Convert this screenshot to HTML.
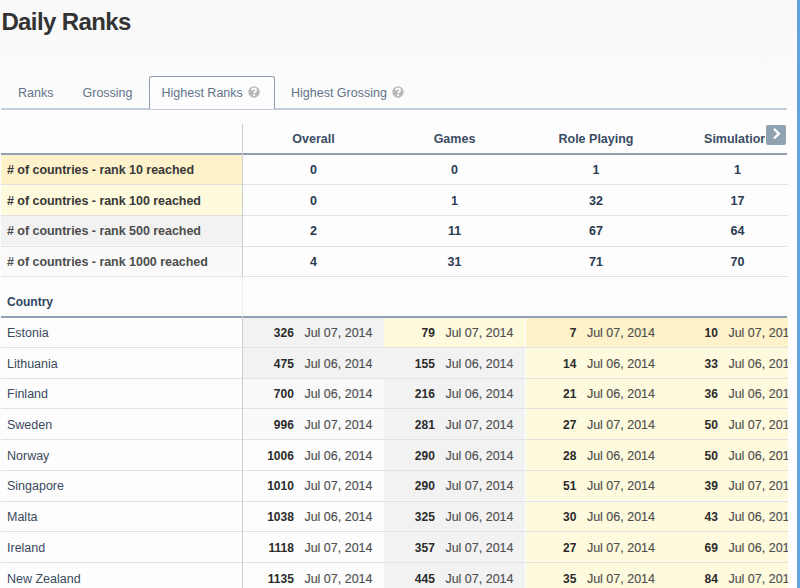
<!DOCTYPE html><html><head><meta charset="utf-8"><style>
*{margin:0;padding:0;box-sizing:border-box}
html,body{width:800px;height:588px;overflow:hidden}
body{font-family:"Liberation Sans",sans-serif;background:#fdfdfd;position:relative;color:#333}
.bg{position:absolute;left:0;top:0;width:800px;height:109px;background:linear-gradient(#f8f8f8,#fcfcfc)}
.title{position:absolute;left:1.4px;top:8.4px;font-size:24px;font-weight:bold;letter-spacing:-0.62px;color:#333;line-height:28px}
.tabline{position:absolute;left:1px;top:108.3px;width:786px;height:1.4px;background:#c0cede}
.tab{position:absolute;top:86px;font-size:12.5px;line-height:14px;color:#60738a;white-space:nowrap}
.atab{position:absolute;left:149px;top:76px;width:126px;height:33px;border:1px solid #8e9db0;border-bottom:none;border-radius:3px 3px 0 0;background:#fdfdfd}
.q{display:inline-block;width:12px;height:12px;vertical-align:-1px;margin-left:5px}
.tbl{position:absolute;left:0;top:0;width:788px;height:588px;overflow:hidden}
.vdiv{position:absolute;left:242px;width:1px;background:#cdcdcd}
.hb{position:absolute;left:1px;height:2px;background:#90a0b2}
.rl{position:absolute;left:1px;height:1px;background:#e2e2e2}
.cell{position:absolute;}
.hd{position:absolute;top:132px;font-size:12.5px;font-weight:bold;color:#3a4c63;text-align:center;width:141px;line-height:14px}
.lab{position:absolute;left:0;width:242px;font-size:12.5px;font-weight:bold;color:#3d3d3d;padding-left:7px;white-space:nowrap;letter-spacing:-0.04px}
.num{position:absolute;font-size:12.5px;font-weight:bold;color:#2a3b52;text-align:center;width:141px}
.cname{position:absolute;left:7px;font-size:12.5px;color:#3a4a5c;white-space:nowrap}
.dc{position:absolute;width:141px;text-align:right;padding-right:11.5px;white-space:nowrap;font-size:12.5px}
.dc b{font-size:12px;color:#2b2b2b;margin-right:10.5px}
.dc span{color:#4f4f4f;-webkit-text-stroke:0.15px #4f4f4f}
.arrow{position:absolute;left:765px;top:121px;width:23px;height:28px;background:#fdfdfd}
.arrow i{position:absolute;left:1px;top:4.3px;width:19.7px;height:19.6px;background:#8fa2b2;border-radius:2px}
.blue{position:absolute;left:797px;top:0;width:3px;height:588px;background:#63a3dc}
</style></head><body>
<div class="bg"></div>
<div class="title">Daily Ranks</div>
<div class="tabline"></div>
<div class="atab"></div>
<div class="tab" style="left:18px">Ranks</div>
<div class="tab" style="left:82.5px">Grossing</div>
<div class="tab" style="left:161.5px">Highest Ranks<svg class="q" width="12" height="12" viewBox="0 0 12 12"><circle cx="6" cy="6" r="5.7" fill="#b7b7b7"/><path d="M3.9 4.5C3.9 3.1 4.9 2.5 6 2.5C7.3 2.5 8.1 3.3 8.1 4.3C8.1 5.6 6.3 5.8 6.1 7.1" stroke="#fff" stroke-width="1.8" fill="none"/><rect x="5.1" y="8.2" width="2" height="1.8" fill="#fff"/></svg></div>
<div class="tab" style="left:291px">Highest Grossing<svg class="q" width="12" height="12" viewBox="0 0 12 12"><circle cx="6" cy="6" r="5.7" fill="#b7b7b7"/><path d="M3.9 4.5C3.9 3.1 4.9 2.5 6 2.5C7.3 2.5 8.1 3.3 8.1 4.3C8.1 5.6 6.3 5.8 6.1 7.1" stroke="#fff" stroke-width="1.8" fill="none"/><rect x="5.1" y="8.2" width="2" height="1.8" fill="#fff"/></svg></div>
<div class="tbl">
<div class="cell" style="left:1px;top:155px;width:241px;height:28.900000000000006px;background:#fdf2c9"></div>
<div class="lab" style="top:163.2px;line-height:14px;color:#383838"># of countries - rank 10 reached</div>
<div class="num" style="left:243px;top:163.2px;line-height:14px">0</div>
<div class="num" style="left:384px;top:163.2px;line-height:14px">0</div>
<div class="num" style="left:525.5px;top:163.2px;line-height:14px">1</div>
<div class="num" style="left:667px;top:163.2px;line-height:14px">1</div>
<div class="cell" style="left:1px;top:184.9px;width:241px;height:29.799999999999983px;background:#fefadd"></div>
<div class="lab" style="top:193.6px;line-height:14px;color:#383838"># of countries - rank 100 reached</div>
<div class="num" style="left:243px;top:193.6px;line-height:14px">0</div>
<div class="num" style="left:384px;top:193.6px;line-height:14px">1</div>
<div class="num" style="left:525.5px;top:193.6px;line-height:14px">32</div>
<div class="num" style="left:667px;top:193.6px;line-height:14px">17</div>
<div class="cell" style="left:1px;top:215.7px;width:241px;height:29.80000000000001px;background:#f2f2f2"></div>
<div class="lab" style="top:224.4px;line-height:14px;color:#4d4d4d"># of countries - rank 500 reached</div>
<div class="num" style="left:243px;top:224.4px;line-height:14px">2</div>
<div class="num" style="left:384px;top:224.4px;line-height:14px">11</div>
<div class="num" style="left:525.5px;top:224.4px;line-height:14px">67</div>
<div class="num" style="left:667px;top:224.4px;line-height:14px">64</div>
<div class="cell" style="left:1px;top:246.5px;width:241px;height:29.600000000000023px;background:#fafafa"></div>
<div class="lab" style="top:255.1px;line-height:14px;color:#4d4d4d"># of countries - rank 1000 reached</div>
<div class="num" style="left:243px;top:255.1px;line-height:14px">4</div>
<div class="num" style="left:384px;top:255.1px;line-height:14px">31</div>
<div class="num" style="left:525.5px;top:255.1px;line-height:14px">71</div>
<div class="num" style="left:667px;top:255.1px;line-height:14px">70</div>
<div class="cell" style="left:243px;top:318.00px;width:141px;height:28.80px;background:#f2f2f2"></div>
<div class="dc" style="left:243px;top:326.2px;line-height:14px"><b>326</b><span>Jul 07, 2014</span></div>
<div class="cell" style="left:384px;top:318.00px;width:141px;height:28.80px;background:#fefadd"></div>
<div class="dc" style="left:384px;top:326.2px;line-height:14px"><b>79</b><span>Jul 07, 2014</span></div>
<div class="cell" style="left:525.5px;top:318.00px;width:141px;height:28.80px;background:#fdf2c9"></div>
<div class="dc" style="left:525.5px;top:326.2px;line-height:14px"><b>7</b><span>Jul 07, 2014</span></div>
<div class="cell" style="left:667px;top:318.00px;width:141px;height:28.80px;background:#fdf2c9"></div>
<div class="dc" style="left:667px;top:326.2px;line-height:14px"><b>10</b><span>Jul 07, 2014</span></div>
<div class="cname" style="top:326.2px;line-height:14px">Estonia</div>
<div class="rl" style="top:346.80px;width:787px"></div>
<div class="cell" style="left:243px;top:347.80px;width:141px;height:29.74px;background:#f2f2f2"></div>
<div class="dc" style="left:243px;top:356.5px;line-height:14px"><b>475</b><span>Jul 06, 2014</span></div>
<div class="cell" style="left:384px;top:347.80px;width:141px;height:29.74px;background:#f2f2f2"></div>
<div class="dc" style="left:384px;top:356.5px;line-height:14px"><b>155</b><span>Jul 06, 2014</span></div>
<div class="cell" style="left:525.5px;top:347.80px;width:141px;height:29.74px;background:#fefadd"></div>
<div class="dc" style="left:525.5px;top:356.5px;line-height:14px"><b>14</b><span>Jul 06, 2014</span></div>
<div class="cell" style="left:667px;top:347.80px;width:141px;height:29.74px;background:#fefadd"></div>
<div class="dc" style="left:667px;top:356.5px;line-height:14px"><b>33</b><span>Jul 06, 2014</span></div>
<div class="cname" style="top:356.5px;line-height:14px">Lithuania</div>
<div class="rl" style="top:377.54px;width:787px"></div>
<div class="cell" style="left:243px;top:378.54px;width:141px;height:29.74px;background:#f9f9f9"></div>
<div class="dc" style="left:243px;top:387.2px;line-height:14px"><b>700</b><span>Jul 06, 2014</span></div>
<div class="cell" style="left:384px;top:378.54px;width:141px;height:29.74px;background:#f2f2f2"></div>
<div class="dc" style="left:384px;top:387.2px;line-height:14px"><b>216</b><span>Jul 06, 2014</span></div>
<div class="cell" style="left:525.5px;top:378.54px;width:141px;height:29.74px;background:#fefadd"></div>
<div class="dc" style="left:525.5px;top:387.2px;line-height:14px"><b>21</b><span>Jul 06, 2014</span></div>
<div class="cell" style="left:667px;top:378.54px;width:141px;height:29.74px;background:#fefadd"></div>
<div class="dc" style="left:667px;top:387.2px;line-height:14px"><b>36</b><span>Jul 06, 2014</span></div>
<div class="cname" style="top:387.2px;line-height:14px">Finland</div>
<div class="rl" style="top:408.28px;width:787px"></div>
<div class="cell" style="left:243px;top:409.28px;width:141px;height:29.74px;background:#f9f9f9"></div>
<div class="dc" style="left:243px;top:417.9px;line-height:14px"><b>996</b><span>Jul 07, 2014</span></div>
<div class="cell" style="left:384px;top:409.28px;width:141px;height:29.74px;background:#f2f2f2"></div>
<div class="dc" style="left:384px;top:417.9px;line-height:14px"><b>281</b><span>Jul 07, 2014</span></div>
<div class="cell" style="left:525.5px;top:409.28px;width:141px;height:29.74px;background:#fefadd"></div>
<div class="dc" style="left:525.5px;top:417.9px;line-height:14px"><b>27</b><span>Jul 07, 2014</span></div>
<div class="cell" style="left:667px;top:409.28px;width:141px;height:29.74px;background:#fefadd"></div>
<div class="dc" style="left:667px;top:417.9px;line-height:14px"><b>50</b><span>Jul 07, 2014</span></div>
<div class="cname" style="top:417.9px;line-height:14px">Sweden</div>
<div class="rl" style="top:439.02px;width:787px"></div>
<div class="cell" style="left:243px;top:440.02px;width:141px;height:29.74px;background:transparent"></div>
<div class="dc" style="left:243px;top:448.7px;line-height:14px"><b>1006</b><span>Jul 06, 2014</span></div>
<div class="cell" style="left:384px;top:440.02px;width:141px;height:29.74px;background:#f2f2f2"></div>
<div class="dc" style="left:384px;top:448.7px;line-height:14px"><b>290</b><span>Jul 06, 2014</span></div>
<div class="cell" style="left:525.5px;top:440.02px;width:141px;height:29.74px;background:#fefadd"></div>
<div class="dc" style="left:525.5px;top:448.7px;line-height:14px"><b>28</b><span>Jul 06, 2014</span></div>
<div class="cell" style="left:667px;top:440.02px;width:141px;height:29.74px;background:#fefadd"></div>
<div class="dc" style="left:667px;top:448.7px;line-height:14px"><b>50</b><span>Jul 06, 2014</span></div>
<div class="cname" style="top:448.7px;line-height:14px">Norway</div>
<div class="rl" style="top:469.76px;width:787px"></div>
<div class="cell" style="left:243px;top:470.76px;width:141px;height:29.74px;background:transparent"></div>
<div class="dc" style="left:243px;top:479.4px;line-height:14px"><b>1010</b><span>Jul 07, 2014</span></div>
<div class="cell" style="left:384px;top:470.76px;width:141px;height:29.74px;background:#f2f2f2"></div>
<div class="dc" style="left:384px;top:479.4px;line-height:14px"><b>290</b><span>Jul 07, 2014</span></div>
<div class="cell" style="left:525.5px;top:470.76px;width:141px;height:29.74px;background:#fefadd"></div>
<div class="dc" style="left:525.5px;top:479.4px;line-height:14px"><b>51</b><span>Jul 07, 2014</span></div>
<div class="cell" style="left:667px;top:470.76px;width:141px;height:29.74px;background:#fefadd"></div>
<div class="dc" style="left:667px;top:479.4px;line-height:14px"><b>39</b><span>Jul 07, 2014</span></div>
<div class="cname" style="top:479.4px;line-height:14px">Singapore</div>
<div class="rl" style="top:500.50px;width:787px"></div>
<div class="cell" style="left:243px;top:501.50px;width:141px;height:29.74px;background:transparent"></div>
<div class="dc" style="left:243px;top:510.2px;line-height:14px"><b>1038</b><span>Jul 06, 2014</span></div>
<div class="cell" style="left:384px;top:501.50px;width:141px;height:29.74px;background:#f2f2f2"></div>
<div class="dc" style="left:384px;top:510.2px;line-height:14px"><b>325</b><span>Jul 06, 2014</span></div>
<div class="cell" style="left:525.5px;top:501.50px;width:141px;height:29.74px;background:#fefadd"></div>
<div class="dc" style="left:525.5px;top:510.2px;line-height:14px"><b>30</b><span>Jul 06, 2014</span></div>
<div class="cell" style="left:667px;top:501.50px;width:141px;height:29.74px;background:#fefadd"></div>
<div class="dc" style="left:667px;top:510.2px;line-height:14px"><b>43</b><span>Jul 06, 2014</span></div>
<div class="cname" style="top:510.2px;line-height:14px">Malta</div>
<div class="rl" style="top:531.24px;width:787px"></div>
<div class="cell" style="left:243px;top:532.24px;width:141px;height:29.74px;background:transparent"></div>
<div class="dc" style="left:243px;top:540.9px;line-height:14px"><b>1118</b><span>Jul 07, 2014</span></div>
<div class="cell" style="left:384px;top:532.24px;width:141px;height:29.74px;background:#f2f2f2"></div>
<div class="dc" style="left:384px;top:540.9px;line-height:14px"><b>357</b><span>Jul 07, 2014</span></div>
<div class="cell" style="left:525.5px;top:532.24px;width:141px;height:29.74px;background:#fefadd"></div>
<div class="dc" style="left:525.5px;top:540.9px;line-height:14px"><b>27</b><span>Jul 07, 2014</span></div>
<div class="cell" style="left:667px;top:532.24px;width:141px;height:29.74px;background:#fefadd"></div>
<div class="dc" style="left:667px;top:540.9px;line-height:14px"><b>69</b><span>Jul 06, 2014</span></div>
<div class="cname" style="top:540.9px;line-height:14px">Ireland</div>
<div class="rl" style="top:561.98px;width:787px"></div>
<div class="cell" style="left:243px;top:562.98px;width:141px;height:29.74px;background:transparent"></div>
<div class="dc" style="left:243px;top:571.6px;line-height:14px"><b>1135</b><span>Jul 07, 2014</span></div>
<div class="cell" style="left:384px;top:562.98px;width:141px;height:29.74px;background:#f2f2f2"></div>
<div class="dc" style="left:384px;top:571.6px;line-height:14px"><b>445</b><span>Jul 07, 2014</span></div>
<div class="cell" style="left:525.5px;top:562.98px;width:141px;height:29.74px;background:#fefadd"></div>
<div class="dc" style="left:525.5px;top:571.6px;line-height:14px"><b>35</b><span>Jul 07, 2014</span></div>
<div class="cell" style="left:667px;top:562.98px;width:141px;height:29.74px;background:#fefadd"></div>
<div class="dc" style="left:667px;top:571.6px;line-height:14px"><b>84</b><span>Jul 07, 2014</span></div>
<div class="cname" style="top:571.6px;line-height:14px">New Zealand</div>
<div class="rl" style="top:592.72px;width:787px"></div>
<div class="rl" style="top:183.90px;width:787px"></div>
<div class="rl" style="top:214.70px;width:787px"></div>
<div class="rl" style="top:245.50px;width:787px"></div>
<div class="rl" style="top:276.10px;width:787px"></div>
<div class="vdiv" style="top:124px;height:152px"></div>
<div class="vdiv" style="top:276.6px;height:40px;background:#ececec"></div>
<div class="vdiv" style="top:318px;height:300px"></div>
<div class="hb" style="top:153px;width:786px"></div>
<div class="hb" style="top:316px;width:786px"></div>
<div class="vdiv" style="top:153px;height:2px;background:#d4d8dd"></div>
<div class="vdiv" style="top:316px;height:2px;background:#d4d8dd"></div>
<div class="hd" style="left:243px">Overall</div>
<div class="hd" style="left:384px">Games</div>
<div class="hd" style="left:525.5px">Role Playing</div>
<div class="hd" style="left:665.5px">Simulation</div>
<div class="cname" style="top:295px;font-weight:bold;font-size:12px;color:#2f4560;line-height:14px">Country</div>
<div class="arrow"><i><svg width="19" height="19" viewBox="0 0 19 19" style="position:absolute;left:0;top:0"><path d="M7.9 3.9 L12.9 8.7 L7.9 13.5" stroke="#fff" stroke-width="2.3" fill="none" stroke-linecap="butt"/></svg></i></div>
</div>
<div class="blue"></div>
</body></html>
